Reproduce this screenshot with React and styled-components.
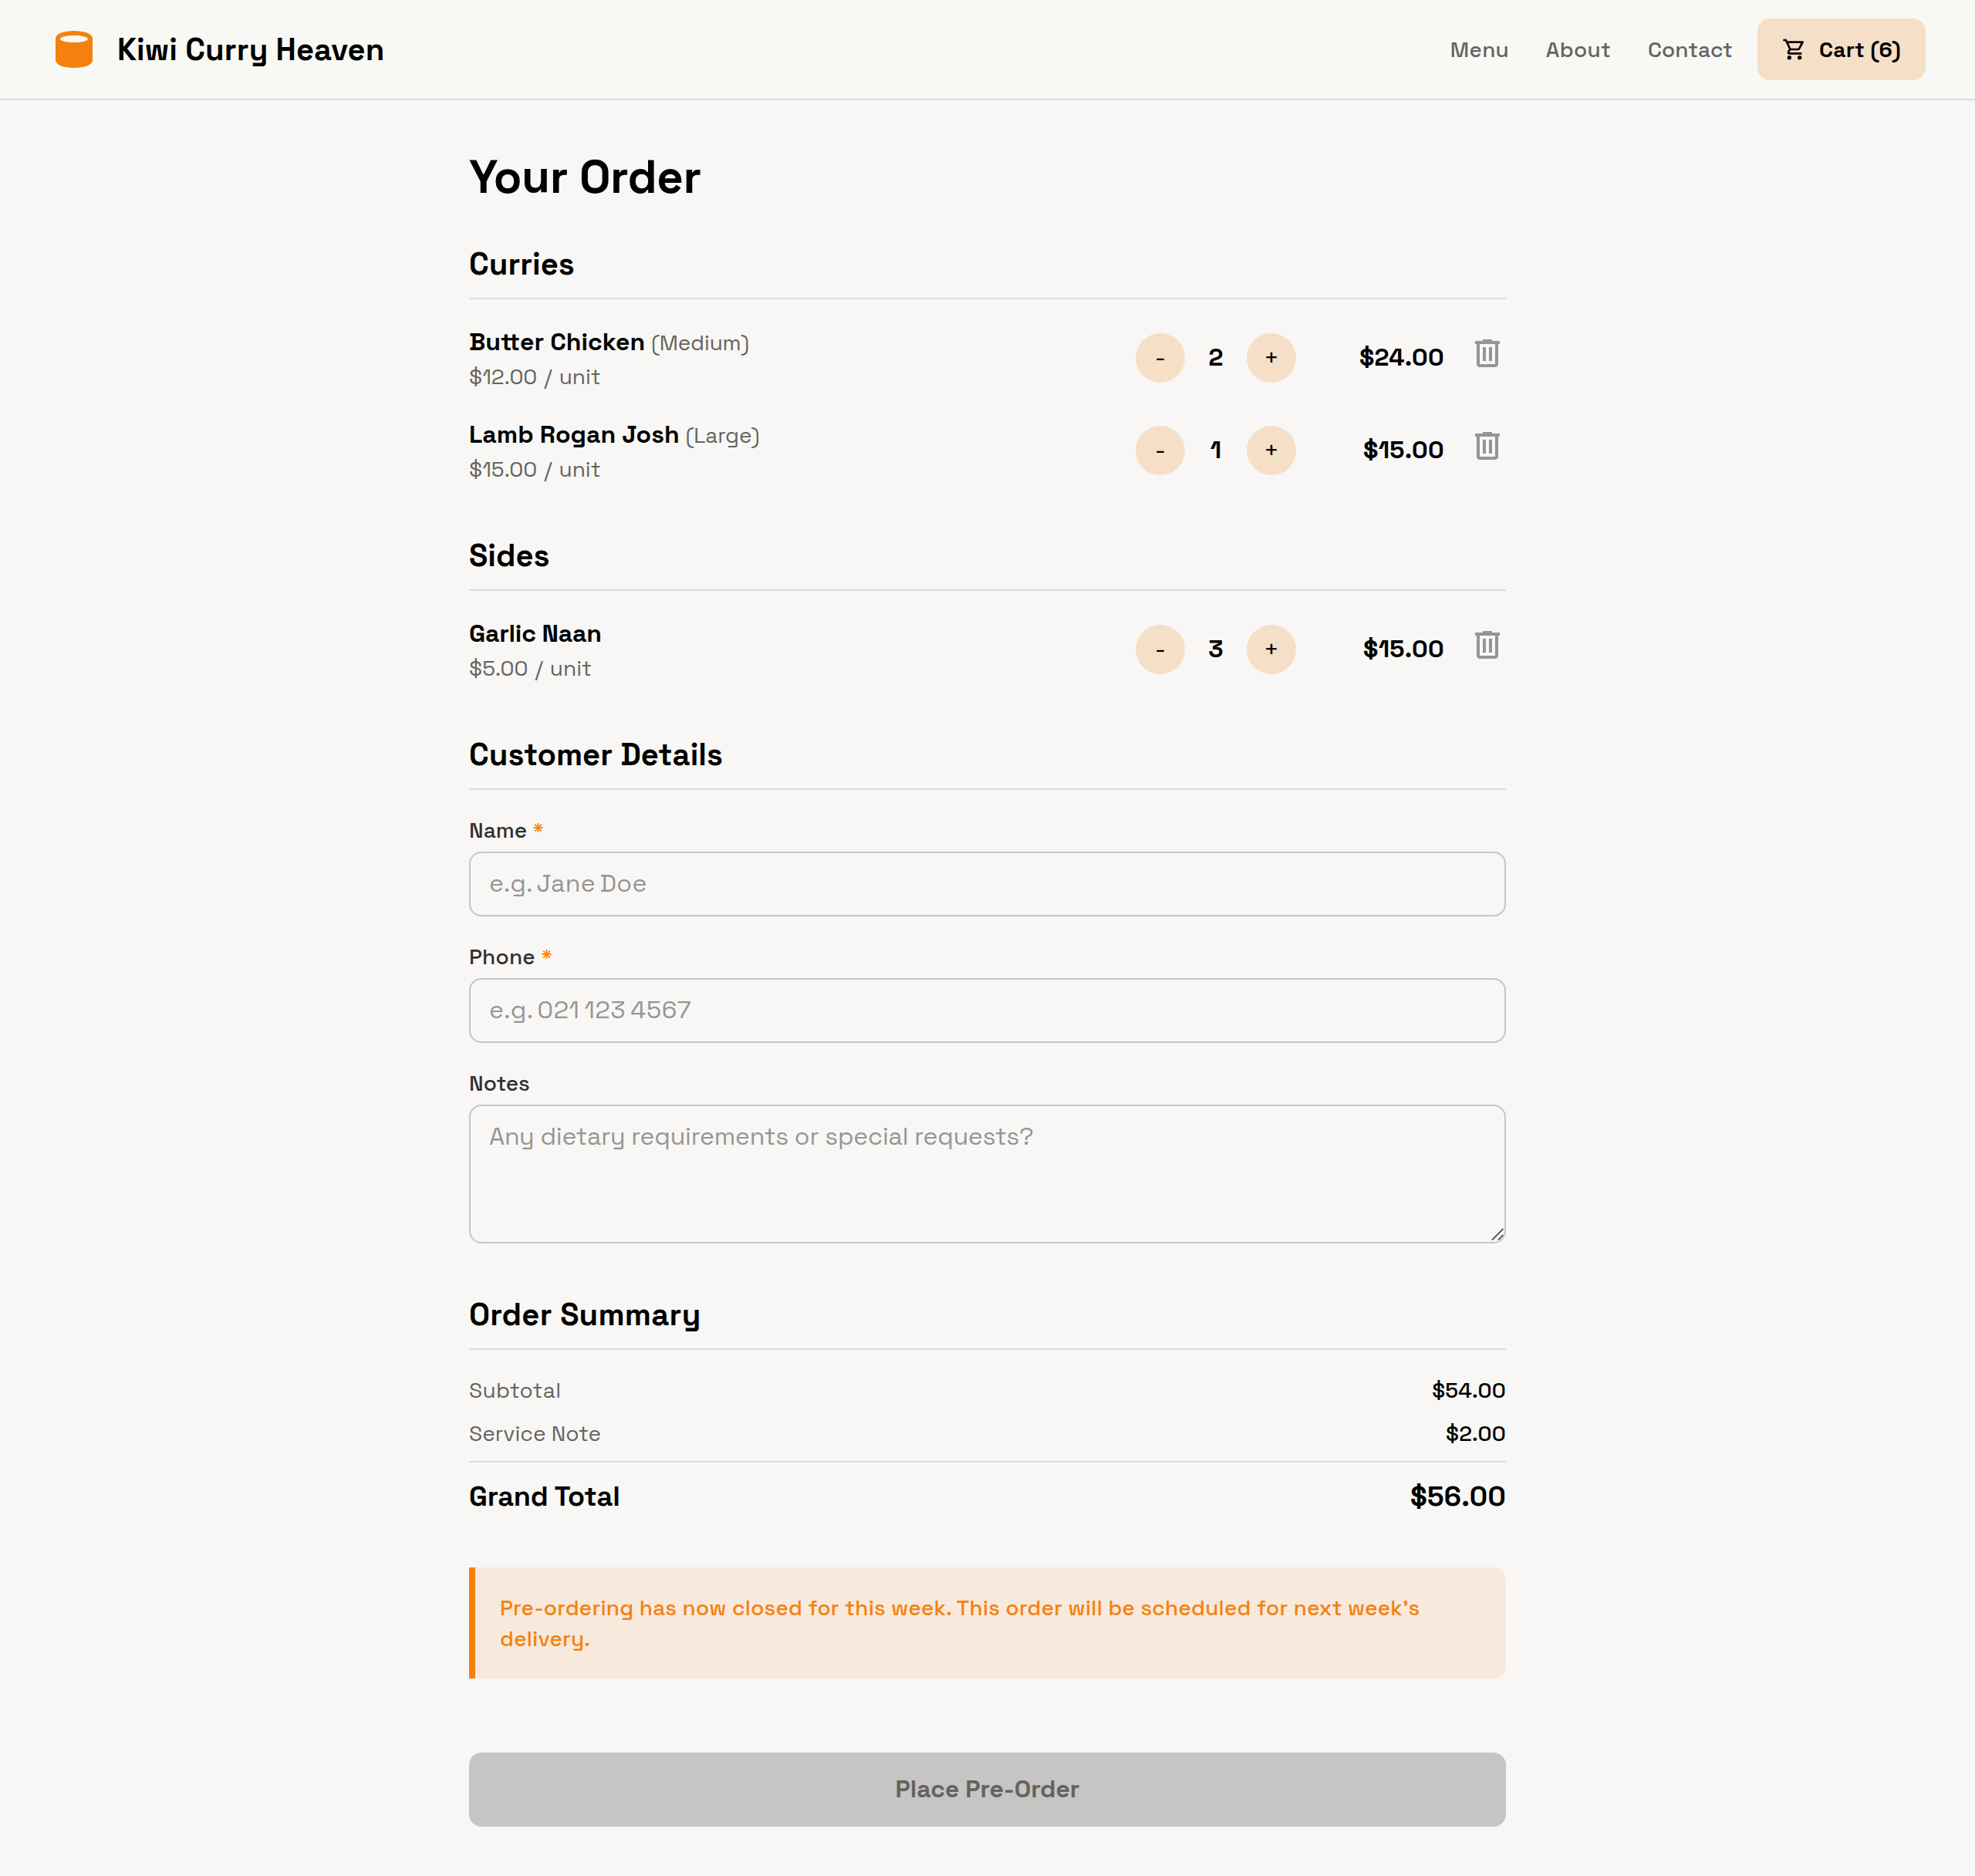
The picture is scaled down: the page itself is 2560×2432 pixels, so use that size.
import React from "react";
import styled, { createGlobalStyle } from "styled-components";

const color = {
  page: "#f8f7f5",
  header: "#f8f9f4",
  ink: "#000000",
  label: "#30302f",
  muted: "#646361",
  faint: "#969593",
  line: "#dddcda",
  field: "#c6c5c3",
  accent: "#f4810f",
  tint: "#f6dfc7",
  notice: "#f7e9dc",
};

const GlobalStyle = createGlobalStyle`
  * { box-sizing: border-box; }
  body {
    margin: 0;
    background: ${color.page};
    color: ${color.ink};
    font-family: "Space Grotesk", Inter, sans-serif;
    font-size: 32px;
    line-height: 48px;
  }
  button, input, textarea { font: inherit; color: inherit; letter-spacing: inherit; }
  h1, h2, p { margin: 0; }
`;

const Page = styled.div`
  min-height: 2432px;
`;

const Header = styled.header`
  display: flex;
  align-items: center;
  justify-content: space-between;
  height: 130px;
  padding: 0 64px;
  background: ${color.header};
  border-bottom: 2px solid ${color.line};
`;

const Brand = styled.div`
  display: flex;
  align-items: center;
  gap: 24px;
`;

const BrandName = styled.span`
  padding-top: 2px;
  font-size: 40px;
  line-height: 50px;
  font-weight: 700;
  letter-spacing: 0.08px;
`;

const Nav = styled.nav`
  display: flex;
  align-items: center;
  gap: 48px;
  font-size: 28px;
  font-weight: 500;
`;

const NavLink = styled.a`
  color: ${color.muted};
  letter-spacing: ${(p) => p.$tracking ?? 0.25}px;
`;

const CartButton = styled.button`
  display: flex;
  align-items: center;
  gap: 16px;
  height: 80px;
  margin-left: -16px;
  padding: 0 32px;
  border: 0;
  border-radius: 16px;
  background: ${color.tint};
  && { font-weight: 700; letter-spacing: 0.25px; }
`;

const Main = styled.main`
  width: 1344px;
  margin: 0 auto;
  padding: 64px 0;
`;

const Title = styled.h1`
  font-size: 60px;
  line-height: 72px;
  font-weight: 700;
  letter-spacing: -0.38px;
`;

const SectionTitle = styled.h2`
  padding: 49px 0 15px;
  border-bottom: 2px solid ${color.line};
  font-size: 40px;
  line-height: 56px;
  font-weight: 700;
  letter-spacing: ${(p) => p.$tracking ?? 0}px;
`;

const ItemList = styled.div`
  padding-top: 16px;
`;

const ItemRow = styled.div`
  display: flex;
  align-items: center;
  height: 120px;
`;

const ItemInfo = styled.div`
  flex: 1;
`;

const ItemName = styled.p`
  height: 48px;
  font-weight: 700;
  letter-spacing: ${(p) => p.$tracking ?? 0}px;
`;

const ItemSize = styled.span`
  font-size: 28px;
  font-weight: 400;
  color: ${color.muted};
  letter-spacing: -0.18px;
`;

const UnitPrice = styled.p`
  font-size: 28px;
  line-height: 42px;
  color: ${color.muted};
  word-spacing: 1.8px;
`;

const Stepper = styled.div`
  display: flex;
  align-items: center;
  gap: 16px;
  margin-right: 32px;
`;

const StepButton = styled.button`
  width: 64px;
  height: 64px;
  padding: 0 0 2px;
  border: 0;
  border-radius: 50%;
  background: ${color.tint};
`;

const Quantity = styled.span`
  width: 48px;
  padding-bottom: 2px;
  text-align: center;
  font-weight: 700;
`;

const LinePrice = styled.span`
  width: 160px;
  padding-bottom: 2px;
  text-align: right;
  font-weight: 700;
  letter-spacing: 0.2px;
`;

const RemoveButton = styled.button`
  display: flex;
  margin-left: 32px;
  padding: 0 0 12px;
  border: 0;
  background: none;
  && { color: ${color.faint}; }
`;

const Form = styled.form`
  display: flex;
  flex-direction: column;
  gap: 32px;
  padding: 32px 0 16px;
`;

const Field = styled.div`
  display: flex;
  flex-direction: column;
  gap: 8px;
`;

const FieldLabel = styled.label`
  font-size: 28px;
  line-height: 40px;
  font-weight: 500;
  color: ${color.label};
  letter-spacing: ${(p) => p.$tracking ?? 0}px;
`;

const Required = styled.span`
  color: ${color.accent};
`;

const TextInput = styled.input`
  width: 100%;
  height: 84px;
  padding: 0 24px 2px;
  border: 2px solid ${color.field};
  border-radius: 16px;
  background: transparent;
  outline: none;
  word-spacing: -2.8px;
  && { letter-spacing: ${(p) => p.$tracking ?? 0}px; }
  &::placeholder { color: ${color.faint}; opacity: 1; }
`;

const NotesBox = styled.div`
  position: relative;
  height: 180px;
`;

const TextArea = styled.textarea`
  display: block;
  width: 100%;
  height: 180px;
  padding: 15px 24px;
  border: 2px solid ${color.field};
  border-radius: 16px;
  background: transparent;
  outline: none;
  resize: none;
  && { letter-spacing: -0.22px; }
  &::placeholder { color: ${color.faint}; opacity: 1; }
`;

const ResizeGrip = styled.svg`
  position: absolute;
  right: 2px;
  bottom: 2px;
`;

const Summary = styled.div`
  display: flex;
  flex-direction: column;
  gap: 16px;
  padding-top: 32px;
`;

const SummaryRow = styled.div`
  display: flex;
  justify-content: space-between;
  font-size: 28px;
  line-height: 40px;
`;

const SummaryLabel = styled.span`
  color: ${color.muted};
  letter-spacing: ${(p) => p.$tracking ?? 0}px;
`;

const SummaryValue = styled.span`
  font-weight: 500;
  letter-spacing: 0.15px;
`;

const TotalRow = styled.div`
  display: flex;
  justify-content: space-between;
  padding-top: 16px;
  border-top: 2px solid ${color.line};
  font-size: 36px;
  line-height: 56px;
  font-weight: 700;
`;

const TotalLabel = styled.span`
  letter-spacing: -0.2px;
`;

const TotalValue = styled.span`
  letter-spacing: 0.25px;
`;

const Notice = styled.p`
  && { margin: 64px 0 96px; }
  padding: 32px;
  border-left: 8px solid ${color.accent};
  border-radius: 0 16px 16px 0;
  background: ${color.notice};
  color: ${color.accent};
  font-size: 28px;
  line-height: 40px;
  font-weight: 500;
  letter-spacing: 0.2px;
`;

const SubmitButton = styled.button`
  display: block;
  width: 100%;
  height: 96px;
  padding: 0 0 2px;
  border: 0;
  border-radius: 16px;
  background: ${color.field};
  && { color: ${color.muted}; font-weight: 700; letter-spacing: -0.1px; }
`;

const PotLogo = () => (
  <svg width="64" height="64" viewBox="0 0 64 64">
    <path
      fill={color.accent}
      fillRule="evenodd"
      d="M8 18C8 11.5 19 8 32 8s24 3.500 24 10v28c0 6.500-11 10-24 10S8 52.500 8 46zM32 14c-9.900 0-18 2-18 4.500S22.100 23 32 23s18-2 18-4.500S41.900 14 32 14z"
    />
  </svg>
);

const CartIcon = () => (
  <svg width="32" height="32" viewBox="0 0 24 24" fill="currentColor">
    <path d="M15.550 13c.75 0 1.410-.41 1.750-1.030l3.580-6.490A.996.996 0 0 0 20.010 4H5.210l-.94-2H1v2h2l3.600 7.590-1.350 2.440C4.520 15.370 5.480 17 7 17h12v-2H7l1.100-2h7.450zM6.160 6h12.150l-2.760 5H8.530L6.160 6z" />
    <circle cx="7" cy="20" r="2" />
    <circle cx="17" cy="20" r="2" />
  </svg>
);

const TrashIcon = () => (
  <svg width="48" height="48" viewBox="0 -960 960 960" fill="currentColor">
    <path d="M280-120q-33 0-56.500-23.500T200-200v-520h-40v-80h200v-40h240v40h200v80h-40v520q0 33-23.500 56.500T680-120H280Zm400-600H280v520h400v-520ZM360-280h80v-360h-80v360Zm160 0h80v-360h-80v360Z" />
  </svg>
);

const sections = [
  {
    title: "Curries",
    items: [
      { name: "Butter Chicken", size: "(Medium)", unit: "$12.00 / unit", qty: 2, price: "$24.00" },
      { name: "Lamb Rogan Josh", size: "(Large)", unit: "$15.00 / unit", qty: 1, price: "$15.00" },
    ],
  },
  {
    title: "Sides",
    items: [{ name: "Garlic Naan", tracking: -0.25, unit: "$5.00 / unit", qty: 3, price: "$15.00" }],
  },
];

const OrderItem = ({ name, size, tracking, unit, qty, price }) => (
  <ItemRow>
    <ItemInfo>
      <ItemName $tracking={tracking}>
        {name} {size && <ItemSize>{size}</ItemSize>}
      </ItemName>
      <UnitPrice>{unit}</UnitPrice>
    </ItemInfo>
    <Stepper>
      <StepButton>-</StepButton>
      <Quantity>{qty}</Quantity>
      <StepButton>+</StepButton>
    </Stepper>
    <LinePrice>{price}</LinePrice>
    <RemoveButton aria-label="Remove">
      <TrashIcon />
    </RemoveButton>
  </ItemRow>
);

export default function App() {
  return (
    <Page>
      <GlobalStyle />
      <Header>
        <Brand>
          <PotLogo />
          <BrandName>Kiwi Curry Heaven</BrandName>
        </Brand>
        <Nav>
          <NavLink>Menu</NavLink>
          <NavLink>About</NavLink>
          <NavLink $tracking={0.06}>Contact</NavLink>
          <CartButton>
            <CartIcon />
            Cart (6)
          </CartButton>
        </Nav>
      </Header>
      <Main>
        <Title>Your Order</Title>
        {sections.map((section) => (
          <section key={section.title}>
            <SectionTitle>{section.title}</SectionTitle>
            <ItemList>
              {section.items.map((item) => (
                <OrderItem key={item.name} {...item} />
              ))}
            </ItemList>
          </section>
        ))}
        <SectionTitle>Customer Details</SectionTitle>
        <Form>
          <Field>
            <FieldLabel>
              Name <Required>*</Required>
            </FieldLabel>
            <TextInput $tracking={0.36} placeholder="e.g. Jane Doe" />
          </Field>
          <Field>
            <FieldLabel $tracking={0.2}>
              Phone <Required>*</Required>
            </FieldLabel>
            <TextInput $tracking={0.6} placeholder="e.g. 021 123 4567" />
          </Field>
          <Field>
            <FieldLabel>Notes</FieldLabel>
            <NotesBox>
              <TextArea placeholder="Any dietary requirements or special requests?" />
              <ResizeGrip width="18" height="20" viewBox="0 0 18 20" fill="none">
                <path d="M2.500 18.500L17 4M10.500 18.500L17 12" stroke="#ffffff" strokeWidth="1.500" />
                <path d="M2 17.500L16.500 3M10 17.500L16.500 11" stroke="#555553" strokeWidth="1.900" />
              </ResizeGrip>
            </NotesBox>
          </Field>
        </Form>
        <SectionTitle $tracking={0.23}>Order Summary</SectionTitle>
        <Summary>
          <SummaryRow>
            <SummaryLabel $tracking={0.33}>Subtotal</SummaryLabel>
            <SummaryValue>$54.00</SummaryValue>
          </SummaryRow>
          <SummaryRow>
            <SummaryLabel>Service Note</SummaryLabel>
            <SummaryValue>$2.00</SummaryValue>
          </SummaryRow>
          <TotalRow>
            <TotalLabel>Grand Total</TotalLabel>
            <TotalValue>$56.00</TotalValue>
          </TotalRow>
        </Summary>
        <Notice>
          Pre-ordering has now closed for this week. This order will be scheduled for next week’s
          delivery.
        </Notice>
        <SubmitButton>Place Pre-Order</SubmitButton>
      </Main>
    </Page>
  );
}
